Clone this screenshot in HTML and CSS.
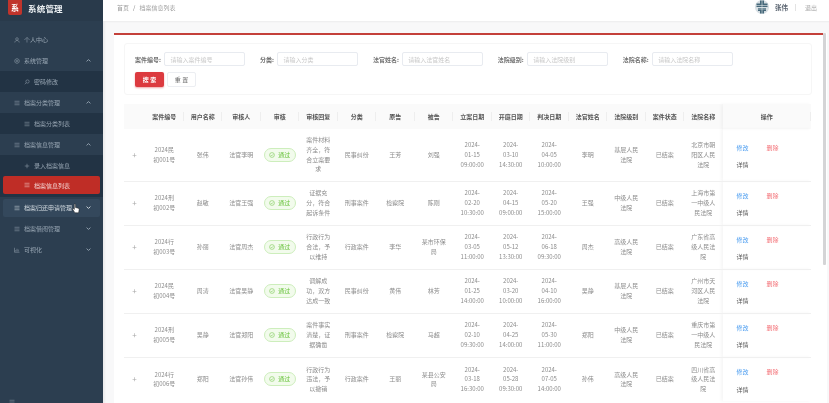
FILE: index.html
```html
<!DOCTYPE html>
<html lang="zh-CN">

<head>
  <meta charset="UTF-8" />
  <meta name="viewport" content="width=device-width, initial-scale=1.0" />
  <title>档案信息列表</title>
  <link rel="stylesheet" href="styles.css">
</head>

<body>
  <svg class="sprite" width="0" height="0">
    <symbol id="i-user" viewBox="0 0 12 12"><circle cx="6" cy="4" r="2.6" fill="none" stroke="currentColor"/><path d="M1.5 11c.4-2.8 2.200-4 4.500-4s4.100 1.200 4.500 4" fill="none" stroke="currentColor"/></symbol>
    <symbol id="i-gear" viewBox="0 0 12 12"><path d="M6 1l4.300 2.500v5L6 11 1.700 8.500v-5z" fill="none" stroke="currentColor"/><circle cx="6" cy="6" r="1.700" fill="none" stroke="currentColor"/></symbol>
    <symbol id="i-search" viewBox="0 0 12 12"><circle cx="7" cy="5" r="3.300" fill="none" stroke="currentColor"/><path d="M4.600 7.400L1.500 10.500" stroke="currentColor" fill="none"/></symbol>
    <symbol id="i-list" viewBox="0 0 12 12"><path d="M1 2.500h10M1 6h10M1 9.500h10" stroke="currentColor" fill="none"/></symbol>
    <symbol id="i-plus" viewBox="0 0 12 12"><path d="M6 1.500v9M1.500 6h9" stroke="currentColor" fill="none"/></symbol>
    <symbol id="i-chart" viewBox="0 0 12 12"><path d="M1 1.500V10.500H11M3.500 9V6M6 9V3.500M8.500 9V5" stroke="currentColor" fill="none"/></symbol>
    <symbol id="i-up" viewBox="0 0 8 8"><path d="M1 5.500L4 2.500l3 3" fill="none" stroke="currentColor" stroke-width="1.500"/></symbol>
    <symbol id="i-down" viewBox="0 0 8 8"><path d="M1 2.500L4 5.500l3-3" fill="none" stroke="currentColor" stroke-width="1.500"/></symbol>
    <symbol id="i-ok" viewBox="0 0 12 12"><circle cx="6" cy="6" r="4.800" fill="none" stroke="currentColor"/><path d="M3.700 6.100l1.700 1.700 3-3.300" fill="none" stroke="currentColor"/></symbol>
  </svg>

  <div class="layout">
    <aside class="sidebar">
      <div class="brand">
        <span class="brand-logo">系</span>
        <span class="brand-name">系统管理</span>
      </div>
      <ul class="menu">
        <li class="menu-item"><svg class="menu-icon"><use href="#i-user"/></svg>个人中心</li>
        <li class="menu-item"><svg class="menu-icon"><use href="#i-gear"/></svg>系统管理<svg class="menu-arrow"><use href="#i-up"/></svg></li>
        <li class="menu-item sub"><svg class="menu-icon"><use href="#i-search"/></svg>密码修改</li>
        <li class="menu-item"><svg class="menu-icon"><use href="#i-list"/></svg>档案分类管理<svg class="menu-arrow"><use href="#i-up"/></svg></li>
        <li class="menu-item sub"><svg class="menu-icon"><use href="#i-list"/></svg>档案分类列表</li>
        <li class="menu-item"><svg class="menu-icon"><use href="#i-list"/></svg>档案信息管理<svg class="menu-arrow"><use href="#i-up"/></svg></li>
        <li class="menu-item sub"><svg class="menu-icon"><use href="#i-plus"/></svg>录入档案信息</li>
        <li class="menu-item sub active-wrap"><div class="menu-active"><svg class="menu-icon"><use href="#i-list"/></svg>档案信息列表</div></li>
        <li class="menu-item hover-wrap"><div class="menu-hover"><svg class="menu-icon"><use href="#i-list"/></svg>档案归还申请管理<svg class="menu-arrow"><use href="#i-down"/></svg></div></li>
        <li class="menu-item"><svg class="menu-icon"><use href="#i-list"/></svg>档案借阅管理<svg class="menu-arrow"><use href="#i-down"/></svg></li>
        <li class="menu-item"><svg class="menu-icon"><use href="#i-chart"/></svg>可视化<svg class="menu-arrow"><use href="#i-down"/></svg></li>
      </ul>
      <svg class="hand" viewBox="0 0 12 16"><path d="M3.500 1.500c.8-.8 1.800-.3 1.800.7v4.300l4 1c1 .3 1.500 1 1.400 2l-.5 3.500c-.1.800-.6 1.500-1.500 1.500H5.500c-.7 0-1.200-.3-1.600-.9L1.200 9.500c-.5-.9.500-1.800 1.300-1.100l1 1V2.500c0-.4 0-.7 0-1z" fill="#fff" stroke="#222" stroke-width=".8"/></svg>
      <svg class="collapse-icon"><use href="#i-list"/></svg>
    </aside>

    <div class="content">
      <header class="topbar">
        <div class="crumbs"><span>首页</span><i>/</i><span>档案信息列表</span></div>
        <div class="account">
          <svg class="avatar" viewBox="0 0 14 14">
            <circle cx="7" cy="7" r="7" fill="#d5dde2"/>
            <path d="M5 .5h4v3h3.500v3.500H1.500V3.500H5zM3 8h8v3H9v2.500H5V11H3z" fill="#46687a"/>
            <path d="M1 5.500h12M1 9h12M7 0v14" stroke="#e3e9ec" stroke-width=".6"/>
          </svg>
          <b class="account-name">张伟</b>
          <span class="account-line"></span>
          <span class="account-out">退出</span>
        </div>
      </header>

      <main class="main">
        <section class="card">
          <div class="search-box">
            <div class="search-row">
              <label class="field"><span>案件编号:</span><span class="fake-input">请输入案件编号</span></label>
              <label class="field"><span>分类:</span><span class="fake-input">请输入分类</span></label>
              <label class="field"><span>法官姓名:</span><span class="fake-input">请输入法官姓名</span></label>
              <label class="field"><span>法院级别:</span><span class="fake-input">请输入法院级别</span></label>
              <label class="field"><span>法院名称:</span><span class="fake-input">请输入法院名称</span></label>
            </div>
            <div class="search-btns">
              <button class="btn btn-red">搜 索</button>
              <button class="btn">重 置</button>
            </div>
          </div>

          <table class="grid">
            <colgroup>
              <col class="col-expand">
              <col span="15" class="col-data">
              <col class="col-ops">
            </colgroup>
            <thead>
              <tr>
                <th></th><th>案件编号</th><th>用户名称</th><th>审核人</th><th>审核</th><th>审核回复</th><th>分类</th><th>原告</th><th>被告</th><th>立案日期</th><th>开庭日期</th><th>判决日期</th><th>法官姓名</th><th>法院级别</th><th>案件状态</th><th>法院名称</th><th class="ops">操作</th>
              </tr>
            </thead>
            <tbody>
              <tr class="tall">
                <td class="plus">+</td><td>2024民<br>初001号</td><td>张伟</td><td>法官李明</td>
                <td><span class="pill"><svg><use href="#i-ok"/></svg>通过</span></td>
                <td>案件材料<br>齐全，符<br>合立案要<br>求</td><td>民事纠纷</td><td>王芳</td><td>刘强</td>
                <td>2024-<br>01-15<br>09:00:00</td><td>2024-<br>03-10<br>14:30:00</td><td>2024-<br>04-05<br>10:00:00</td>
                <td>李明</td><td>基层人民<br>法院</td><td>已结案</td><td>北京市朝<br>阳区人民<br>法院</td>
                <td class="ops"><div class="ops-grid"><a class="blue">修改</a><a class="red">删除</a><a>详情</a></div></td>
              </tr>
              <tr>
                <td class="plus">+</td><td>2024刑<br>初002号</td><td>赵敏</td><td>法官王强</td>
                <td><span class="pill"><svg><use href="#i-ok"/></svg>通过</span></td>
                <td>证据充<br>分，符合<br>起诉条件</td><td>刑事案件</td><td>检察院</td><td>陈刚</td>
                <td>2024-<br>02-20<br>10:30:00</td><td>2024-<br>04-15<br>09:00:00</td><td>2024-<br>05-20<br>15:00:00</td>
                <td>王强</td><td>中级人民<br>法院</td><td>已结案</td><td>上海市第<br>一中级人<br>民法院</td>
                <td class="ops"><div class="ops-grid"><a class="blue">修改</a><a class="red">删除</a><a>详情</a></div></td>
              </tr>
              <tr>
                <td class="plus">+</td><td>2024行<br>初003号</td><td>孙丽</td><td>法官周杰</td>
                <td><span class="pill"><svg><use href="#i-ok"/></svg>通过</span></td>
                <td>行政行为<br>合法，予<br>以维持</td><td>行政案件</td><td>李华</td><td>某市环保<br>局</td>
                <td>2024-<br>03-05<br>11:00:00</td><td>2024-<br>05-12<br>13:30:00</td><td>2024-<br>06-18<br>09:30:00</td>
                <td>周杰</td><td>高级人民<br>法院</td><td>已结案</td><td>广东省高<br>级人民法<br>院</td>
                <td class="ops"><div class="ops-grid"><a class="blue">修改</a><a class="red">删除</a><a>详情</a></div></td>
              </tr>
              <tr>
                <td class="plus">+</td><td>2024民<br>初004号</td><td>周涛</td><td>法官吴静</td>
                <td><span class="pill"><svg><use href="#i-ok"/></svg>通过</span></td>
                <td>调解成<br>功，双方<br>达成一致</td><td>民事纠纷</td><td>黄伟</td><td>林芳</td>
                <td>2024-<br>01-25<br>14:00:00</td><td>2024-<br>03-20<br>10:00:00</td><td>2024-<br>04-10<br>16:00:00</td>
                <td>吴静</td><td>基层人民<br>法院</td><td>已结案</td><td>广州市天<br>河区人民<br>法院</td>
                <td class="ops"><div class="ops-grid"><a class="blue">修改</a><a class="red">删除</a><a>详情</a></div></td>
              </tr>
              <tr>
                <td class="plus">+</td><td>2024刑<br>初005号</td><td>吴静</td><td>法官郑阳</td>
                <td><span class="pill"><svg><use href="#i-ok"/></svg>通过</span></td>
                <td>案件事实<br>清楚，证<br>据确凿</td><td>刑事案件</td><td>检察院</td><td>马超</td>
                <td>2024-<br>02-10<br>09:30:00</td><td>2024-<br>04-25<br>14:00:00</td><td>2024-<br>05-30<br>11:00:00</td>
                <td>郑阳</td><td>中级人民<br>法院</td><td>已结案</td><td>重庆市第<br>一中级人<br>民法院</td>
                <td class="ops"><div class="ops-grid"><a class="blue">修改</a><a class="red">删除</a><a>详情</a></div></td>
              </tr>
              <tr>
                <td class="plus">+</td><td>2024行<br>初006号</td><td>郑阳</td><td>法官孙伟</td>
                <td><span class="pill"><svg><use href="#i-ok"/></svg>通过</span></td>
                <td>行政行为<br>违法，予<br>以撤销</td><td>行政案件</td><td>王丽</td><td>某县公安<br>局</td>
                <td>2024-<br>03-18<br>16:30:00</td><td>2024-<br>05-28<br>09:30:00</td><td>2024-<br>07-05<br>14:00:00</td>
                <td>孙伟</td><td>高级人民<br>法院</td><td>已结案</td><td>四川省高<br>级人民法<br>院</td>
                <td class="ops"><div class="ops-grid"><a class="blue">修改</a><a class="red">删除</a><a>详情</a></div></td>
              </tr>
            </tbody>
          </table>
        </section>
        <div class="scroll-track"><div class="scroll-thumb"></div></div>
      </main>
    </div>
  </div>
</body>

</html>
```

FILE: styles.css
```css
* {
  margin: 0;
  padding: 0;
  box-sizing: border-box;
}

html,
body {
  height: 100%;
  overflow: hidden;
  background: #fff;
}

body {
  font-family: "Noto Sans CJK SC", "Noto Sans", sans-serif;
  font-size: 6px;
  color: #8c8c8c;
}

.sprite {
  display: block;
  width: 0;
  height: 0;
}

.layout {
  display: flex;
  height: 100vh;
  filter: blur(0.5px);
}

/* sidebar */
.sidebar {
  position: relative;
  width: 103px;
  flex-shrink: 0;
  background: #2c3e50;
  color: #98a6b3;
}

.brand {
  display: flex;
  align-items: center;
  height: 21px;
  padding: 0 0 6px 8px;
  background: #293a4b;
}

.brand-logo {
  display: flex;
  align-items: center;
  justify-content: center;
  width: 14px;
  height: 15px;
  border-radius: 0 0 2px 2px;
  background: #c0342c;
  color: #fff;
  font-size: 8px;
  font-weight: 700;
}

.brand-name {
  margin-left: 6px;
  font-size: 8.500px;
  font-weight: 700;
  letter-spacing: .2px;
  color: #eaeef1;
}

.menu {
  list-style: none;
  padding-top: 8px;
}

.menu-item {
  display: flex;
  align-items: center;
  height: 21px;
  padding: 0 12px 0 14px;
}

.menu-icon {
  width: 6px;
  height: 6px;
  margin-right: 4px;
  flex-shrink: 0;
}

.menu-arrow {
  width: 5px;
  height: 5px;
  margin-left: auto;
  flex-shrink: 0;
}

.menu-item.sub {
  padding-left: 24px;
  background: #223344;
}

.menu-item.active-wrap {
  padding: 0 3px 3px;
  height: 21px;
}

.menu-active {
  display: flex;
  align-items: center;
  width: 100%;
  height: 18px;
  padding-left: 21px;
  border-radius: 2px;
  background: #bf2d26;
  color: #f3d5d3;
}

.menu-item.hover-wrap {
  padding: 0 3px;
}

.menu-hover {
  display: flex;
  align-items: center;
  width: 100%;
  height: 18px;
  padding: 0 9px 0 11px;
  border-radius: 2px;
  background: #34485c;
  color: #d5dce2;
}

.hand {
  position: absolute;
  left: 72px;
  top: 203px;
  width: 8px;
  height: 11px;
}

.collapse-icon {
  position: absolute;
  left: 9px;
  top: 399px;
  width: 6px;
  height: 6px;
  color: #8b98a5;
}

/* top bar */
.content {
  flex: 1;
  min-width: 0;
  display: flex;
  flex-direction: column;
}

.topbar {
  display: flex;
  align-items: flex-start;
  justify-content: space-between;
  height: 21px;
  padding: 0 12px 0 14px;
  background: #fff;
}

.crumbs {
  display: flex;
  align-items: center;
  height: 14px;
  color: #a0a0a0;
}

.crumbs i {
  margin: 0 4px;
  font-style: normal;
  color: #777;
}

.account {
  display: flex;
  align-items: center;
  height: 14px;
}

.avatar {
  width: 14px;
  height: 14px;
}

.account-name {
  margin-left: 6px;
  font-size: 6.500px;
  color: #5a6470;
}

.account-line {
  width: 1px;
  height: 7px;
  margin: 0 9px 0 7px;
  background: #e3e3e3;
}

.account-out {
  color: #a8a8a8;
}

/* main */
.main {
  flex: 1;
  min-height: 0;
  display: flex;
  padding: 12px 2px 0 11px;
  background: #f8f8f9;
  box-shadow: inset 2px 1px 2px rgba(0, 0, 0, .05);
}

.card {
  flex: 1;
  min-width: 0;
  padding: 8px 11px 0 10px;
  background: #fff;
  border-top: 2px solid #c4403a;
  overflow: hidden;
}

.scroll-track {
  width: 4px;
  flex-shrink: 0;
  background: #fff;
}

.scroll-thumb {
  width: 2.500px;
  height: 232px;
  border-radius: 1px;
  background: #d4d4d6;
}

/* search */
.search-box {
  height: 52px;
  padding: 8px 0 0 10px;
  border: 1px solid #f6f6f6;
  border-radius: 3px;
}

.search-row {
  display: flex;
  gap: 14.500px;
  height: 14px;
}

.field {
  display: flex;
  align-items: center;
  font-weight: 700;
  color: #707070;
}

.fake-input {
  display: flex;
  align-items: center;
  width: 81px;
  height: 14px;
  margin-left: 3.500px;
  padding-left: 5px;
  border: 1px solid #e8ebf0;
  border-radius: 2px;
  font-weight: 400;
  color: #c8c8c8;
}

.search-btns {
  display: flex;
  gap: 3px;
  margin-top: 6px;
}

.btn {
  width: 29px;
  height: 15px;
  border: 1px solid #eceef2;
  border-radius: 2px;
  background: #fff;
  font: inherit;
  color: #666;
}

.btn-red {
  width: 29px;
  border: none;
  background: #dc3a3f;
  color: #fff;
  font-weight: 700;
  box-shadow: 0 1px 2px rgba(220, 58, 63, .45);
}

/* table */
.grid {
  width: 687px;
  margin-top: 9px;
  border-collapse: collapse;
  table-layout: fixed;
}

.col-expand {
  width: 21px;
}

.col-data {
  width: 38.500px;
}

.col-ops {
  width: 88.500px;
}

.grid th {
  height: 25px;
  background-color: #fafafa;
  background-image: linear-gradient(#eeeeee, #eeeeee);
  background-repeat: no-repeat;
  background-position: right center;
  background-size: 1px 9px;
  font-weight: 700;
  color: #555;
}

.grid th:first-child,
.grid th:nth-child(16) {
  background-image: none;
}

.grid td {
  height: 44px;
  border-top: 1px solid #f0f0f0;
  text-align: center;
  line-height: 9.700px;
}

.grid tr.tall td {
  height: 52px;
  border-top: none;
}

.grid .ops {
  box-shadow: -2px 0 3px rgba(0, 0, 0, .04);
}

.grid td.plus {
  font-size: 8px;
  color: #a8a8a8;
}

.pill {
  display: inline-flex;
  align-items: center;
  justify-content: center;
  width: 32px;
  height: 14px;
  border: 1px solid #cdeebc;
  border-radius: 7px;
  background: #f2fbec;
  color: #67c23a;
}

.pill svg {
  width: 6px;
  height: 6px;
  margin-right: 3px;
}

.ops-grid {
  display: grid;
  grid-template-columns: 30px 30px;
  row-gap: 7.500px;
  padding: 3px 0 0 14px;
  text-align: left;
}

.ops-grid a {
  color: #555;
}

.ops-grid .blue {
  color: #4a9cf0;
}

.ops-grid .red {
  color: #f4767c;
}
```
